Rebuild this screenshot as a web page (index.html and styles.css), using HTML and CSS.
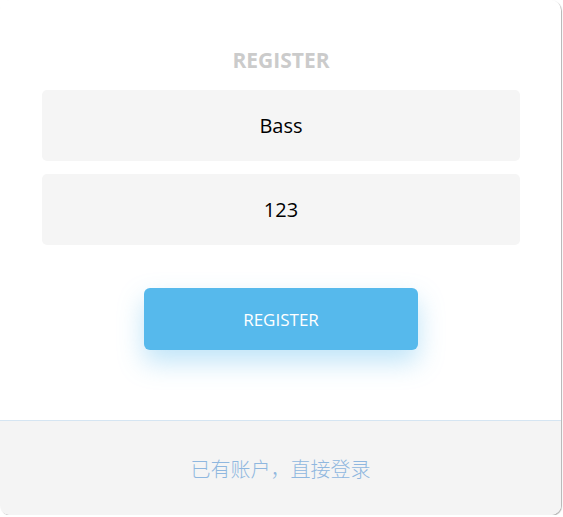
FILE: index.html
```html
<!DOCTYPE html>
<html lang="zh-CN">
<head>
<meta charset="utf-8">
<title>Register</title>
<link rel="stylesheet" href="styles.css">
</head>
<body>
<div class="card">
  <section class="main">
    <h1 class="title">REGISTER</h1>
    <div class="field">Bass</div>
    <div class="field">123</div>
    <button class="btn">REGISTER</button>
  </section>
  <footer class="foot">
    <span class="link">已有账户，直接登录</span>
  </footer>
</div>
</body>
</html>
```
FILE: styles.css
```css
* { box-sizing: border-box; }
html, body {
  margin: 0;
  padding: 0;
  background: #ffffff;
}
body {
  font-family: "Open Sans", "Noto Sans CJK SC", sans-serif;
}
.card {
  width: 561px;
  height: 515px;
  background: #ffffff;
  border-radius: 10px;
  box-shadow: 1px 1px 1px rgba(0, 0, 0, 0.3);
  display: flex;
  flex-direction: column;
  overflow: hidden;
}
.main {
  height: 420px;
  padding: 45px 41px 0 42px;
  display: flex;
  flex-direction: column;
  align-items: center;
}
.title {
  margin: 0 0 15px;
  font-size: 21px;
  line-height: 30px;
  font-weight: 700;
  color: #cbcbcb;
}
.field {
  width: 100%;
  height: 71px;
  background: #f5f5f5;
  border-radius: 5px;
  display: flex;
  align-items: center;
  justify-content: center;
  font-size: 20px;
  color: #000;
  margin-bottom: 13px;
}
.field + .field { margin-bottom: 0; }
.btn {
  margin-top: 43px;
  width: 274px;
  height: 62px;
  border: none;
  border-radius: 6px;
  background: #56b9ec;
  color: #ffffff;
  font-family: "Open Sans", sans-serif;
  font-size: 17px;
  box-shadow: 0 12px 26px rgba(86, 185, 236, 0.38);
}
.foot {
  flex: 1;
  background: #f4f4f4;
  border-top: 1px solid #d5e5f2;
  display: flex;
  align-items: center;
  justify-content: center;
}
.link {
  font-family: "Noto Sans CJK SC", sans-serif;
  font-size: 20px;
  font-weight: 300;
  color: #8fb7df;
}
```
